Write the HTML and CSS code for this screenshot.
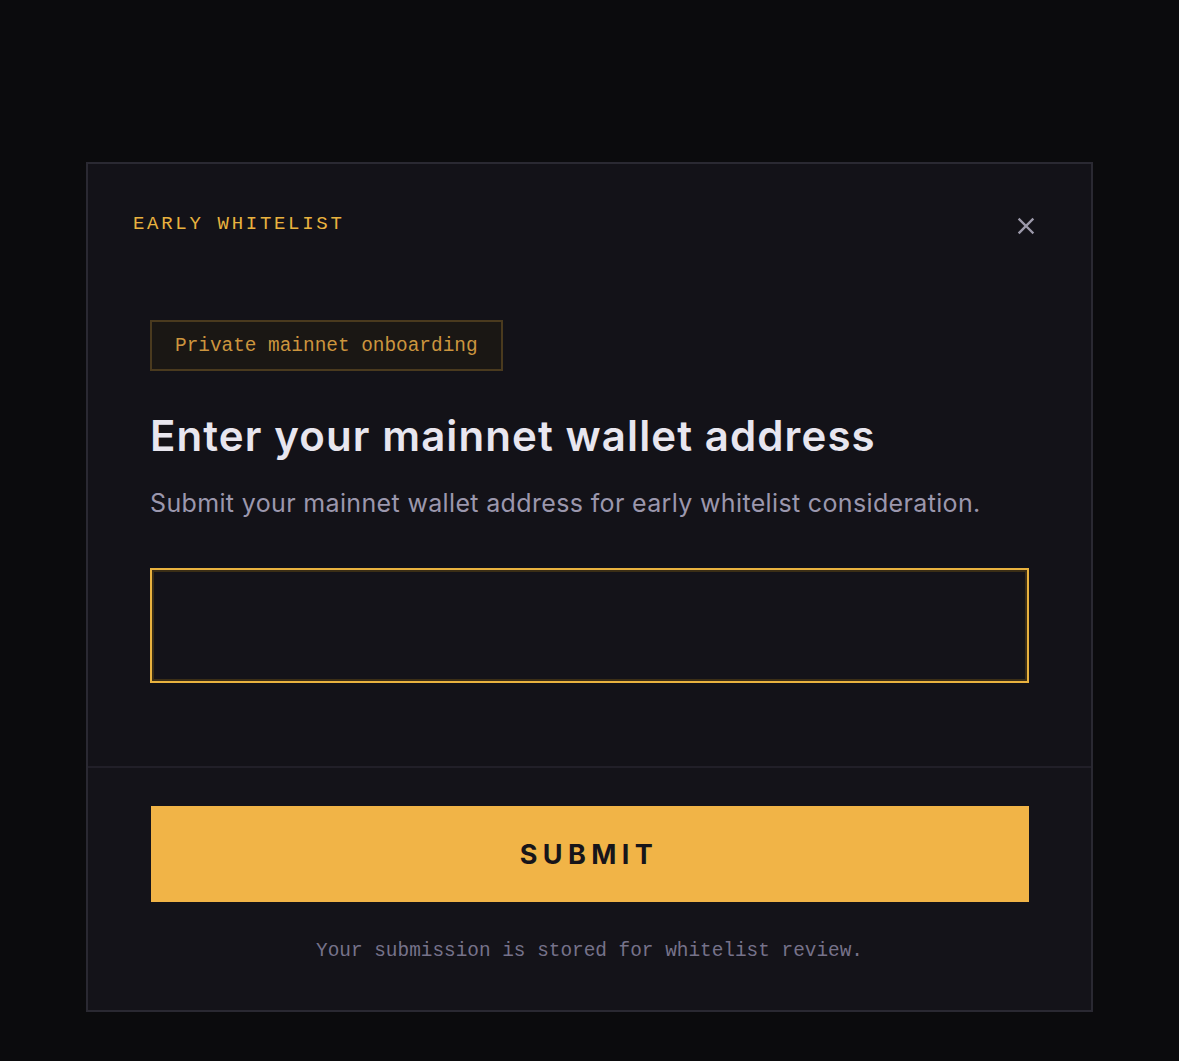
FILE: index.html
```html
<!DOCTYPE html>
<html lang="en">
<head>
<meta charset="utf-8">
<title>Early Whitelist</title>
<link rel="stylesheet" href="styles.css">
</head>
<body>
<div class="page">
  <div class="modal">
    <div class="modal-main">
      <div class="modal-head">
        <span class="eyebrow">EARLY WHITELIST</span>
        <button class="close" aria-label="Close">
          <svg width="18" height="18" viewBox="0 0 18 18" fill="none"><path d="M2.5 2.5 L15.5 15.5 M15.5 2.5 L2.5 15.5" stroke="#9c99aa" stroke-width="2.4" stroke-linecap="square"/></svg>
        </button>
      </div>
      <div class="modal-body">
        <span class="badge">Private mainnet onboarding</span>
        <h1 class="title">Enter your mainnet wallet address</h1>
        <p class="subtitle">Submit your mainnet wallet address for early whitelist consideration.</p>
        <input class="field" type="text" aria-label="Wallet address">
      </div>
    </div>
    <div class="modal-foot">
      <button class="submit">SUBMIT</button>
      <p class="note">Your submission is stored for whitelist review.</p>
    </div>
  </div>
</div>
</body>
</html>
```
FILE: styles.css
```css
html, body {
  margin: 0;
  padding: 0;
  background: #0b0b0d;
}
.page {
  display: flex;
  justify-content: center;
  padding-top: 162px;
  min-height: 1061px;
  box-sizing: border-box;
}
.modal {
  width: 1007px;
  height: 850px;
  box-sizing: border-box;
  border: 2px solid #2a2932;
  background: #131218;
  display: flex;
  flex-direction: column;
}
.modal-main {
  height: 604px;
  border-bottom: 2px solid #211f28;
  box-sizing: border-box;
}
.modal-head {
  display: flex;
  justify-content: space-between;
  align-items: center;
  padding: 46px 56px 0 45px;
  height: 28px;
}
.eyebrow {
  font-family: "Liberation Mono", "DejaVu Sans Mono", monospace;
  font-size: 19px;
  letter-spacing: 2.7px;
  color: #e9b23f;
}
.close {
  background: none;
  border: 0;
  padding: 0;
  width: 18px;
  height: 18px;
  margin-top: 4px;
  display: flex;
}
.modal-body {
  padding: 82px 62px 0 62px;
  display: flex;
  flex-direction: column;
  align-items: flex-start;
}
.badge {
  font-family: "Liberation Mono", "DejaVu Sans Mono", monospace;
  font-size: 19.4px;
  color: #cc953e;
  border: 2px solid #4a3a1e;
  background: #1a1714;
  padding: 12px 23px 11px 23px;
  line-height: 24px;
}
.title {
  font-family: Inter, "Liberation Sans", sans-serif;
  font-weight: 600;
  font-size: 42px;
  letter-spacing: 1.1px;
  color: #e8e6ef;
  margin: 41px 0 0 0;
  line-height: 48px;
}
.subtitle {
  font-family: Inter, "Liberation Sans", sans-serif;
  font-size: 25px;
  letter-spacing: 0.35px;
  color: #9b97ad;
  margin: 27px 0 0 0;
  line-height: 32px;
}
.field {
  margin-top: 49px;
  width: 879px;
  height: 115px;
  box-sizing: border-box;
  border: 2px solid #e9b23f;
  box-shadow: inset 0 0 0 2px #3b2e16;
  background: #141319;
  outline: none;
}
.modal-foot {
  padding: 38px 62px 0 62px;
  display: flex;
  flex-direction: column;
  align-items: center;
  background: #141319;
  flex: 1;
}
.submit {
  width: 878px;
  height: 96px;
  border: 0;
  background: #f1b447;
  color: #17151a;
  font-family: Inter, "Liberation Sans", sans-serif;
  font-weight: 700;
  font-size: 27px;
  letter-spacing: 5.4px;
  padding-left: 5px;
}
.note {
  font-family: "Liberation Mono", "DejaVu Sans Mono", monospace;
  font-size: 19.4px;
  color: #76728a;
  margin: 37px 0 0 0;
  line-height: 24px;
}
```
